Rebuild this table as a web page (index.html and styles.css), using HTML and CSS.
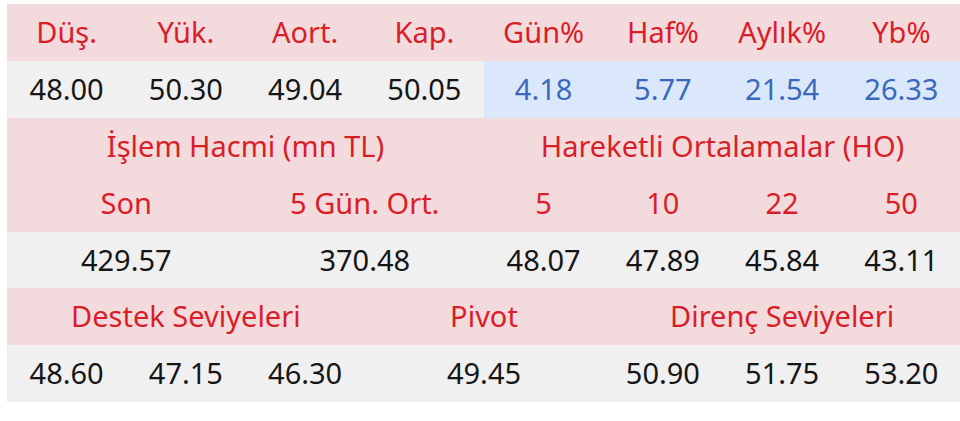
FILE: index.html
```html
<!DOCTYPE html>
<html lang="tr">
<head>
<meta charset="utf-8">
<link rel="stylesheet" href="styles.css">
</head>
<body>
<div class="table">
  <div class="c h">Düş.</div>
  <div class="c h">Yük.</div>
  <div class="c h">Aort.</div>
  <div class="c h">Kap.</div>
  <div class="c h">Gün%</div>
  <div class="c h">Haf%</div>
  <div class="c h">Aylık%</div>
  <div class="c h">Yb%</div>

  <div class="c d">48.00</div>
  <div class="c d">50.30</div>
  <div class="c d">49.04</div>
  <div class="c d">50.05</div>
  <div class="c b">4.18</div>
  <div class="c b">5.77</div>
  <div class="c b">21.54</div>
  <div class="c b">26.33</div>

  <div class="c h s4">İşlem Hacmi (mn TL)</div>
  <div class="c h s4">Hareketli Ortalamalar (HO)</div>

  <div class="c h s2">Son</div>
  <div class="c h s2">5 Gün. Ort.</div>
  <div class="c h">5</div>
  <div class="c h">10</div>
  <div class="c h">22</div>
  <div class="c h">50</div>

  <div class="c d s2">429.57</div>
  <div class="c d s2">370.48</div>
  <div class="c d">48.07</div>
  <div class="c d">47.89</div>
  <div class="c d">45.84</div>
  <div class="c d">43.11</div>

  <div class="c h s3">Destek Seviyeleri</div>
  <div class="c h s2">Pivot</div>
  <div class="c h s3">Direnç Seviyeleri</div>

  <div class="c d">48.60</div>
  <div class="c d">47.15</div>
  <div class="c d">46.30</div>
  <div class="c d s2">49.45</div>
  <div class="c d">50.90</div>
  <div class="c d">51.75</div>
  <div class="c d">53.20</div>
</div>
</body>
</html>
```

FILE: styles.css
```css
html, body {
  margin: 0;
  padding: 0;
  background: #ffffff;
  overflow: hidden;
}
body {
  padding: 4px 0 0 7px;
  font-family: "Noto Sans", "Open Sans", sans-serif;
}
.table {
  display: grid;
  grid-template-columns: repeat(8, 119.25px);
  grid-auto-rows: 56.9px;
  width: 954px;
}
.c {
  display: flex;
  align-items: center;
  justify-content: center;
  padding-bottom: 2px;
  box-sizing: border-box;
  font-size: 29px;
  line-height: 1;
  white-space: nowrap;
}
.h {
  background: #f2dadd;
  color: #da1e28;
}
.d {
  background: #f0f0f0;
  color: #161616;
}
.b {
  background: #dbe8fb;
  color: #3a68bd;
}
.s2 { grid-column: span 2; }
.s3 { grid-column: span 3; }
.s4 { grid-column: span 4; }
```
